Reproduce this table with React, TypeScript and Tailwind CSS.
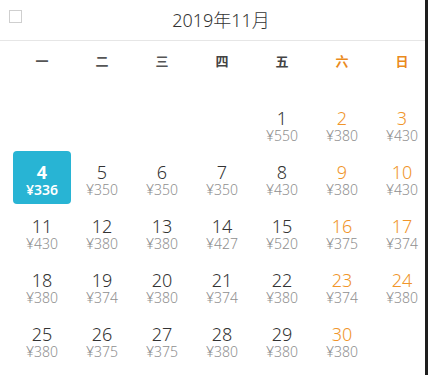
const WEEKDAYS = ["一", "二", "三", "四", "五", "六", "日"];

const PRICES: Record<number, number> = {
  1: 550, 2: 380, 3: 430,
  4: 336, 5: 350, 6: 350, 7: 350, 8: 430, 9: 380, 10: 430,
  11: 430, 12: 380, 13: 380, 14: 427, 15: 520, 16: 375, 17: 374,
  18: 380, 19: 374, 20: 380, 21: 374, 22: 380, 23: 374, 24: 380,
  25: 380, 26: 375, 27: 375, 28: 380, 29: 380, 30: 380,
};

const FONT = { fontFamily: '"Noto Sans", "Noto Sans CJK SC", sans-serif' };

function DayCell({ day, col }: { day: number | null; col: number }) {
  if (day === null) return <div className="h-[54px]" />;
  const weekend = col >= 5;
  const selected = day === 4;

  if (selected) {
    return (
      <div className="h-[54px] px-[1px] pb-[1px]">
        <div className="flex h-full flex-col items-center rounded-[4px] bg-[#28b4d4] text-white">
          <span className="mt-[12px] text-[18px] font-bold leading-[18px]">{day}</span>
          <span className="mt-[1px] text-[14px] font-semibold leading-[16px]">¥{PRICES[day]}</span>
        </div>
      </div>
    );
  }

  return (
    <div className="flex h-[54px] flex-col items-center">
      <span
        className={`mt-[12px] text-[18px] font-light leading-[18px] ${
          weekend ? "text-[#f0952a]" : "text-[#333333]"
        }`}
      >
        {day}
      </span>
      <span className="mt-[1px] text-[14px] font-light leading-[16px] text-[#8f8f8f]">
        ¥{PRICES[day]}
      </span>
    </div>
  );
}

export default function App() {
  const cells: (number | null)[] = [null, null, null, null];
  for (let d = 1; d <= 30; d++) cells.push(d);
  while (cells.length % 7) cells.push(null);

  return (
    <div className="flex h-[375px] w-[428px] bg-white" style={FONT}>
      <div className="w-[425px] overflow-hidden">
        <div className="relative flex h-[41px] items-center justify-center border-b border-[#e6e6e6] pl-[17px]">
          <div className="absolute left-[9px] top-[10px] h-[13px] w-[13px] border border-[#cfcfcf]" />
          <span className="text-[18px] font-light leading-none text-[#333333]">2019年11月</span>
        </div>

        <div className="grid h-[42px] grid-cols-[repeat(7,60px)] items-center pl-[12px]">
          {WEEKDAYS.map((w, i) => (
            <div
              key={w}
              className={`text-center text-[13px] font-bold ${
                i >= 5 ? "text-[#ea8a1c]" : i >= 3 ? "text-[#444444]" : "text-[#555555]"
              }`}
            >
              {w}
            </div>
          ))}
        </div>

        <div className="mt-[14px] grid grid-cols-[repeat(7,60px)] pl-[12px]">
          {cells.map((d, i) => (
            <DayCell key={i} day={d} col={i % 7} />
          ))}
        </div>
      </div>
      <div className="w-[3px] bg-[#1e1e1e]" />
    </div>
  );
}
